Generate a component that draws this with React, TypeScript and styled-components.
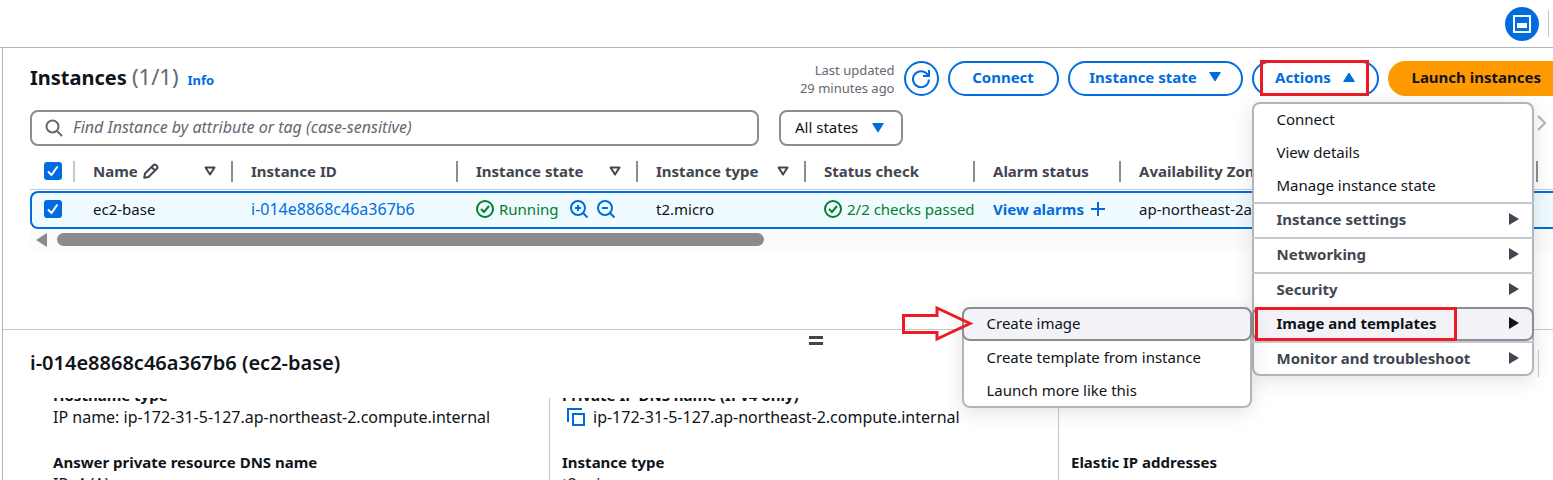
import React from "react";
import styled, { createGlobalStyle, css } from "styled-components";

const c = {
  text: "#0f141a",
  heading: "#424650",
  muted: "#656871",
  blue: "#006ce0",
  green: "#00802f",
  line: "#c6c6cd",
  control: "#8c8c94",
  menuLine: "#b4b4bb",
  orange: "#ff9900",
  mark: "#ed1c24",
};

const GlobalStyle = createGlobalStyle`
  *, *::before, *::after { box-sizing: border-box; }
  body { margin: 0; overflow: hidden; background: #fff; }
  body, button, input, select {
    font-family: "Noto Sans", "Open Sans", sans-serif;
    font-size: 15px;
    line-height: 22px;
    color: ${c.text};
  }
  button { margin: 0; padding: 0; border: 0; background: none; }
  h1, h2, dl, dd, dt, ul, p { margin: 0; padding: 0; }
  ul { list-style: none; }
  a { color: ${c.blue}; text-decoration: none; }
  svg { display: block; flex: none; }
`;

const Shell = styled.div`
  display: flex;
  flex-direction: column;
  height: 100vh;
  overflow: hidden;
`;

const TopBar = styled.header`
  display: flex;
  flex: none;
  align-items: center;
  justify-content: flex-end;
  gap: 9px;
  height: 48px;
  padding-right: 4px;
  border-bottom: 1px solid ${c.menuLine};
`;

const PanelToggle = styled.button`
  display: grid;
  place-items: center;
  width: 34px;
  height: 34px;
  border-radius: 50%;
  background: ${c.blue};
`;

const Rule = styled.span`
  width: 1px;
  height: 27px;
  background: ${c.line};
`;

const Main = styled.main`
  display: flex;
  flex: 1;
  flex-direction: column;
  min-height: 0;
  margin-left: 2px;
  border-left: 1px solid ${c.menuLine};
`;

const List = styled.section`
  flex: none;
  min-height: 281px;
  padding: 13px 0 0 27px;
`;

const ListHeader = styled.div`
  display: flex;
  align-items: center;
  justify-content: space-between;
  height: 35px;
`;

const TitleGroup = styled.div`
  display: flex;
  align-items: baseline;
  gap: 9px;
  padding-bottom: 3px;
`;

const Title = styled.h1`
  font-size: 20px;
  line-height: 28px;
  font-weight: 700;
`;

const Count = styled.span`
  font-size: 22px;
  font-weight: 400;
  color: ${c.muted};
`;

const InfoLink = styled.a`
  font-size: 13px;
  font-weight: 700;
`;

const Tools = styled.div`
  display: flex;
  align-items: center;
  gap: 9px;
`;

const Updated = styled.p`
  font-size: 13px;
  line-height: 18px;
  text-align: right;
  color: ${c.muted};
`;

const PillButton = styled.button<{ $width: number }>`
  display: flex;
  align-items: center;
  justify-content: center;
  gap: 12px;
  width: ${(p) => p.$width}px;
  height: 35px;
  padding-bottom: 3px;
  border: 2px solid ${c.blue};
  border-radius: 18px;
  background: #fff;
  color: ${c.blue};
  font-weight: 700;
  white-space: nowrap;
`;

const IconButton = styled(PillButton)`
  padding: 0;
`;

const PrimaryButton = styled.button`
  height: 35px;
  padding: 0 12px 3px 24px;
  border-radius: 18px 0 0 18px;
  background: ${c.orange};
  font-weight: 700;
  white-space: nowrap;
`;

const ActionsAnchor = styled.div`
  position: relative;
  z-index: 2;
`;

const menuSurface = css`
  position: absolute;
  border-radius: 8px;
  background: #fff;
  box-shadow: inset 0 0 0 2px ${c.menuLine}, 0 4px 20px rgba(0, 7, 22, 0.12);
`;

const Menu = styled.ul`
  ${menuSurface}
  top: 41px;
  left: 0;
  width: 282px;
  padding-top: 1px;
`;

const SubMenu = styled.ul`
  ${menuSurface}
  top: 0;
  right: 100%;
  width: 290px;
  padding-bottom: 1px;
`;

const MenuEntry = styled.li`
  position: relative;
`;

type Kind = "plain" | "group" | "active";

const MenuButton = styled.button<{ $kind: Kind; $bold?: boolean }>`
  display: flex;
  align-items: center;
  justify-content: space-between;
  width: 100%;
  height: ${(p) => (p.$kind === "plain" ? 33 : p.$kind === "group" ? 35 : 34)}px;
  padding: 0 15px ${(p) => (p.$kind === "plain" ? 1 : 3)}px 25px;
  text-align: left;
  font-weight: ${(p) => (p.$bold ? 700 : 400)};
  color: ${(p) => (p.$kind === "group" ? c.heading : c.text)};
  ${(p) =>
    p.$kind === "group" &&
    css`
      border-top: 2px solid ${c.line};
    `}
  ${(p) =>
    p.$kind === "active" &&
    css`
      padding: 0 13px 2px 23px;
      border: 2px solid ${c.control};
      border-radius: 8px;
      background: #f3f3f7;
    `}
`;

const Highlight = styled.span<{ $width: number; $left: number; $top: number; $height: number }>`
  position: absolute;
  top: ${(p) => p.$top}px;
  left: ${(p) => p.$left}px;
  width: ${(p) => p.$width}px;
  height: ${(p) => p.$height}px;
  border: 3px solid ${c.mark};
  pointer-events: none;
`;

const ArrowMark = styled.svg`
  position: absolute;
  top: -2px;
  right: 278px;
`;

const Filters = styled.div`
  display: flex;
  align-items: center;
  gap: 20px;
  margin-top: 14px;
`;

const SearchBox = styled.label`
  display: flex;
  flex: 0 1 729px;
  align-items: center;
  gap: 10px;
  height: 36px;
  padding: 0 13px;
  border: 2px solid ${c.control};
  border-radius: 8px;
`;

const SearchInput = styled.input`
  flex: 1;
  min-width: 0;
  padding: 0 0 2px;
  border: 0;
  outline: 0;
  background: none;
  font-size: 16px;
  &::placeholder {
    color: ${c.muted};
    font-style: italic;
    opacity: 1;
  }
`;

const SelectBox = styled.div`
  position: relative;
  svg {
    position: absolute;
    top: 13px;
    right: 19px;
    pointer-events: none;
  }
`;

const Select = styled.select`
  width: 124px;
  height: 36px;
  padding: 0 14px 3px;
  appearance: none;
  border: 2px solid ${c.control};
  border-radius: 8px;
  background: #fff;
`;

const NextPage = styled.button`
  margin: 0 7px 10px auto;
`;

const TableClip = styled.div`
  overflow: hidden;
  margin-top: 7px;
`;

const Table = styled.table`
  width: 100%;
  min-width: 1523px;
  table-layout: fixed;
  border-spacing: 0;
`;

const HeadCell = styled.th`
  height: 37px;
  padding: 0;
  border-bottom: 1px solid ${c.line};
  text-align: left;
  font-weight: 700;
  color: ${c.heading};
`;

const HeadInner = styled.div<{ $first?: boolean }>`
  display: flex;
  align-items: center;
  gap: 5px;
  height: 21px;
  padding: ${(p) => (p.$first ? "0 0 0 14px" : "0 15px 0 18px")};
  border-right: 2px solid ${(p) => (p.$first ? c.line : c.control)};
  white-space: nowrap;
  svg.sort { margin-left: auto; }
`;

const Cell = styled.td`
  height: 38px;
  padding: 0 0 2px;
  border: solid ${c.blue};
  border-width: 2px 0;
  background: #f0fbff;
  &:first-child { border-left-width: 2px; border-radius: 8px 0 0 8px; }
`;

const CellInner = styled.div<{ $first?: boolean; $wide?: boolean }>`
  display: flex;
  align-items: center;
  gap: 5px;
  overflow: hidden;
  margin-right: 1px;
  padding-left: ${(p) => (p.$first ? 12 : 18)}px;
  font-size: ${(p) => (p.$wide ? 16 : 15)}px;
  white-space: nowrap;
`;

const Spacer = styled.tr`
  height: 1px;
  td { padding: 0; }
`;

const Tick = styled.input`
  appearance: none;
  width: 18px;
  height: 18px;
  margin: 0;
  border-radius: 3px;
  background: ${c.blue};
`;

const TickBox = styled.label`
  position: relative;
  display: block;
  width: 18px;
  height: 18px;
  input { display: block; }
  svg { position: absolute; inset: 0; pointer-events: none; }
`;

const Status = styled.span`
  display: flex;
  align-items: center;
  gap: 5px;
  color: ${c.green};
`;

const StateFilters = styled.span`
  display: flex;
  gap: 9px;
  margin-left: 6px;
`;

const AlarmLink = styled.a`
  display: flex;
  align-items: center;
  gap: 7px;
  font-weight: 700;
`;

const ScrollTrack = styled.div`
  display: flex;
  align-items: center;
  gap: 10px;
  height: 21px;
  padding-left: 6px;
  border-radius: 0 0 0 8px;
  background: #fbfbfb;
`;

const ScrollThumb = styled.div`
  flex: 0 1 707px;
  height: 13px;
  border-radius: 7px;
  background: #8b8b8b;
`;

const Split = styled.section`
  display: flex;
  flex: 1;
  flex-direction: column;
  min-height: 0;
  border-top: 1px solid ${c.line};
`;

const Handle = styled.button`
  align-self: center;
  width: 14px;
  height: 9px;
  margin: 6px 0 0 75px;
  border: solid ${c.heading};
  border-width: 3px 0;
`;

const SplitHeader = styled.div`
  display: flex;
  flex: none;
  align-items: center;
  justify-content: space-between;
  margin-top: 4px;
  padding: 0 14px 0 27px;
`;

const SplitTitle = styled.h2`
  font-size: 20px;
  line-height: 28px;
  font-weight: 600;
`;

const Details = styled.div`
  display: grid;
  flex: 1;
  grid-template-columns: 509fr 509fr 495fr;
  min-height: 0;
  margin-top: 21px;
  padding-left: 37px;
  overflow: hidden;
`;

const DetailColumn = styled.dl`
  height: 200px;
  padding-left: 12px;
  border-left: 1px solid ${c.line};
  &:first-child { border-color: transparent; }
`;

const Field = styled.div`
  height: 67px;
  &:first-child { margin-top: -14px; }
`;

const Label = styled.dt`
  font-weight: 700;
`;

const Value = styled.dd`
  display: flex;
  align-items: center;
  gap: 8px;
  font-size: 16px;
  white-space: nowrap;
  svg { margin-left: 5px; }
`;

const Caret = ({ up = false }: { up?: boolean }) => (
  <svg width="12" height="10" viewBox="0 0 12 10" fill="currentColor" stroke="currentColor" strokeLinejoin="round" aria-hidden="true">
    <path d={up ? "M6 1 11.300 9.500H.7z" : "M.7.5h10.600L6 9z"} />
  </svg>
);

const SortIcon = () => (
  <svg className="sort" width="12" height="10" viewBox="0 0 12 10" fill="none" stroke={c.heading} strokeWidth="2" strokeLinejoin="round" aria-hidden="true">
    <path d="M1.500 1.500h9L6 8.500z" />
  </svg>
);

const RightTriangle = () => (
  <svg width="10" height="12" viewBox="0 0 10 12" fill="currentColor" aria-hidden="true">
    <path d="M0 0 10 6 0 12z" />
  </svg>
);

const CheckCircle = () => (
  <svg width="18" height="18" viewBox="0 0 18 18" fill="none" stroke={c.green} strokeWidth="2" aria-hidden="true">
    <circle cx="9" cy="9" r="8" />
    <path d="m5 9 3 3 5-6" />
  </svg>
);

const Magnifier = ({ sign }: { sign: "plus" | "minus" }) => (
  <svg width="18" height="18" viewBox="0 0 18 18" fill="none" stroke={c.blue} strokeWidth="2" aria-hidden="true">
    <circle cx="8" cy="8" r="7" />
    <path d={sign === "plus" ? "M13 13l4.500 4.500M8 5v6M5 8h6" : "M13 13l4.500 4.500M5 8h6"} />
  </svg>
);

const Checkbox = ({ label }: { label: string }) => (
  <TickBox>
    <Tick type="checkbox" defaultChecked aria-label={label} />
    <svg width="18" height="18" viewBox="0 0 18 18" fill="none" stroke="#fff" strokeWidth="2" aria-hidden="true">
      <path d="m4 9.500 3.500 3.500 6-8.500" />
    </svg>
  </TickBox>
);

const columns = [
  { name: "Name", width: 158, sortable: true, editable: true },
  { name: "Instance ID", width: 225 },
  { name: "Instance state", width: 180, sortable: true },
  { name: "Instance type", width: 168, sortable: true },
  { name: "Status check", width: 169 },
  { name: "Alarm status", width: 146 },
  { name: "Availability Zone", width: 417 },
];

const plainActions = ["Connect", "View details", "Manage instance state"];
const groupActions = ["Instance settings", "Networking", "Security"];

const ActionsMenu = () => (
  <Menu>
    {plainActions.map((a) => (
      <MenuEntry key={a}>
        <MenuButton $kind="plain">{a}</MenuButton>
      </MenuEntry>
    ))}
    {groupActions.map((a) => (
      <MenuEntry key={a}>
        <MenuButton $kind="group" $bold>{a}<RightTriangle /></MenuButton>
      </MenuEntry>
    ))}
    <MenuEntry>
      <MenuButton $kind="active" $bold aria-expanded="true">
        Image and templates<RightTriangle />
      </MenuButton>
      <Highlight $left={3} $top={0} $width={202} $height={34} />
      <SubMenu>
        <MenuEntry>
          <MenuButton $kind="active">Create image</MenuButton>
          <ArrowMark width="73" height="38" viewBox="0 0 73 38" fill="none" stroke={c.mark} strokeWidth="3" aria-hidden="true">
            <path d="M2.500 10.500H36V3L69 18.500 36 34V27.500H2.500z" />
          </ArrowMark>
        </MenuEntry>
        <MenuEntry><MenuButton $kind="plain">Create template from instance</MenuButton></MenuEntry>
        <MenuEntry><MenuButton $kind="plain">Launch more like this</MenuButton></MenuEntry>
      </SubMenu>
    </MenuEntry>
    <MenuEntry>
      <MenuButton $kind="group" $bold>Monitor and troubleshoot<RightTriangle /></MenuButton>
    </MenuEntry>
  </Menu>
);

const InstanceTable = () => (
  <TableClip>
    <Table>
      <colgroup>
        <col style={{ width: 45 }} />
        {columns.map((col) => <col key={col.name} style={{ width: col.width }} />)}
        <col />
      </colgroup>
      <thead>
        <tr>
          <HeadCell><HeadInner $first><Checkbox label="Select all instances" /></HeadInner></HeadCell>
          {columns.map((col) => (
            <HeadCell key={col.name} scope="col">
              <HeadInner>
                {col.name}
                {col.editable && (
                  <svg width="16" height="16" viewBox="0 0 16 16" fill="none" stroke={c.heading} strokeWidth="2" strokeLinejoin="round" aria-hidden="true">
                    <path d="M1.200 14.800 2 10.500 10.300 2.200Q11.700.8 13.100 2.200L13.800 2.900Q15.200 4.300 13.800 5.700L5.500 14zM8.500 4l3.500 3.500" />
                  </svg>
                )}
                {col.sortable && <SortIcon />}
              </HeadInner>
            </HeadCell>
          ))}
          <HeadCell aria-hidden="true" />
        </tr>
      </thead>
      <tbody>
        <Spacer><td colSpan={9} /></Spacer>
        <tr>
          <Cell><CellInner $first><Checkbox label="Select ec2-base" /></CellInner></Cell>
          <Cell><CellInner>ec2-base</CellInner></Cell>
          <Cell><CellInner $wide><a href="#instance">i-014e8868c46a367b6</a></CellInner></Cell>
          <Cell>
            <CellInner>
              <Status><CheckCircle />Running</Status>
              <StateFilters>
                <button aria-label="Include running"><Magnifier sign="plus" /></button>
                <button aria-label="Exclude running"><Magnifier sign="minus" /></button>
              </StateFilters>
            </CellInner>
          </Cell>
          <Cell><CellInner>t2.micro</CellInner></Cell>
          <Cell><CellInner><Status><CheckCircle />2/2 checks passed</Status></CellInner></Cell>
          <Cell>
            <CellInner>
              <AlarmLink href="#alarms">
                View alarms
                <svg width="14" height="14" viewBox="0 0 14 14" stroke="currentColor" strokeWidth="2" aria-hidden="true">
                  <path d="M7 0v14M0 7h14" />
                </svg>
              </AlarmLink>
            </CellInner>
          </Cell>
          <Cell><CellInner>ap-northeast-2a</CellInner></Cell>
          <Cell />
        </tr>
      </tbody>
    </Table>
    <ScrollTrack>
      <svg width="11" height="14" viewBox="0 0 11 14" fill="#8b8b8b" aria-hidden="true"><path d="M11 0v14L0 7z" /></svg>
      <ScrollThumb />
    </ScrollTrack>
  </TableClip>
);

export default function App() {
  return (
    <Shell>
      <GlobalStyle />
      <TopBar>
        <PanelToggle aria-label="Toggle split panel">
          <svg width="18" height="18" viewBox="0 0 18 18" fill="none" stroke="#fff" aria-hidden="true">
            <path strokeWidth="2" d="M1 1h16v16H1z" />
            <path fill="#fff" stroke="none" d="M4 8h10v5H4z" />
          </svg>
        </PanelToggle>
        <Rule />
      </TopBar>
      <Main>
        <List>
          <ListHeader>
            <TitleGroup>
              <Title>Instances <Count>(1/1)</Count></Title>
              <InfoLink href="#info">Info</InfoLink>
            </TitleGroup>
            <Tools>
              <Updated>Last updated<br />29 minutes ago</Updated>
              <IconButton $width={35} aria-label="Refresh">
                <svg width="18" height="18" viewBox="0 0 18 18" fill="none" stroke="currentColor" strokeWidth="2" aria-hidden="true">
                  <path d="M17 9.500A8 8 0 1 1 15.500 4.500L16.500 6M17 0v6h-6" />
                </svg>
              </IconButton>
              <PillButton $width={111}>Connect</PillButton>
              <PillButton $width={175}>Instance state<Caret /></PillButton>
              <ActionsAnchor>
                <PillButton $width={127} aria-expanded="true">Actions<Caret up /></PillButton>
                <Highlight $left={8} $top={-1} $width={109} $height={36} />
                <ActionsMenu />
              </ActionsAnchor>
              <PrimaryButton>Launch instances</PrimaryButton>
            </Tools>
          </ListHeader>
          <Filters>
            <SearchBox>
              <svg width="18" height="18" viewBox="0 0 18 18" fill="none" stroke={c.muted} strokeWidth="2" aria-hidden="true">
                <circle cx="7.500" cy="7.500" r="6" />
                <path d="m12 12 5 5" />
              </svg>
              <SearchInput aria-label="Find instances" placeholder="Find Instance by attribute or tag (case-sensitive)" />
            </SearchBox>
            <SelectBox>
              <Select aria-label="Instance states">
                <option>All states</option>
              </Select>
              <svg width="12" height="10" viewBox="0 0 12 10" fill={c.blue} stroke={c.blue} strokeLinejoin="round" aria-hidden="true">
                <path d="M.7.5h10.600L6 9z" />
              </svg>
            </SelectBox>
            <NextPage aria-label="Next page">
              <svg width="9" height="16" viewBox="0 0 9 16" fill="none" stroke={c.menuLine} strokeWidth="2" aria-hidden="true">
                <path d="m1 1 7 7-7 7" />
              </svg>
            </NextPage>
          </Filters>
          <InstanceTable />
        </List>
        <Split>
          <Handle aria-label="Resize panel" />
          <SplitHeader>
            <SplitTitle>i-014e8868c46a367b6 (ec2-base)</SplitTitle>
            <Rule />
          </SplitHeader>
          <Details>
            <DetailColumn>
              <Field><Label>Hostname type</Label><Value>IP name: ip-172-31-5-127.ap-northeast-2.compute.internal</Value></Field>
              <Field><Label>Answer private resource DNS name</Label><Value>IPv4 (A)</Value></Field>
            </DetailColumn>
            <DetailColumn>
              <Field>
                <Label>Private IP DNS name (IPv4 only)</Label>
                <Value>
                  <svg width="18" height="18" viewBox="0 0 18 18" fill="none" stroke={c.blue} strokeWidth="2" aria-hidden="true">
                    <path d="M15 1H1v13M6 6h11v11H6z" />
                  </svg>
                  ip-172-31-5-127.ap-northeast-2.compute.internal
                </Value>
              </Field>
              <Field><Label>Instance type</Label><Value>t2.micro</Value></Field>
            </DetailColumn>
            <DetailColumn>
              <Field />
              <Field><Label>Elastic IP addresses</Label></Field>
            </DetailColumn>
          </Details>
        </Split>
      </Main>
    </Shell>
  );
}
